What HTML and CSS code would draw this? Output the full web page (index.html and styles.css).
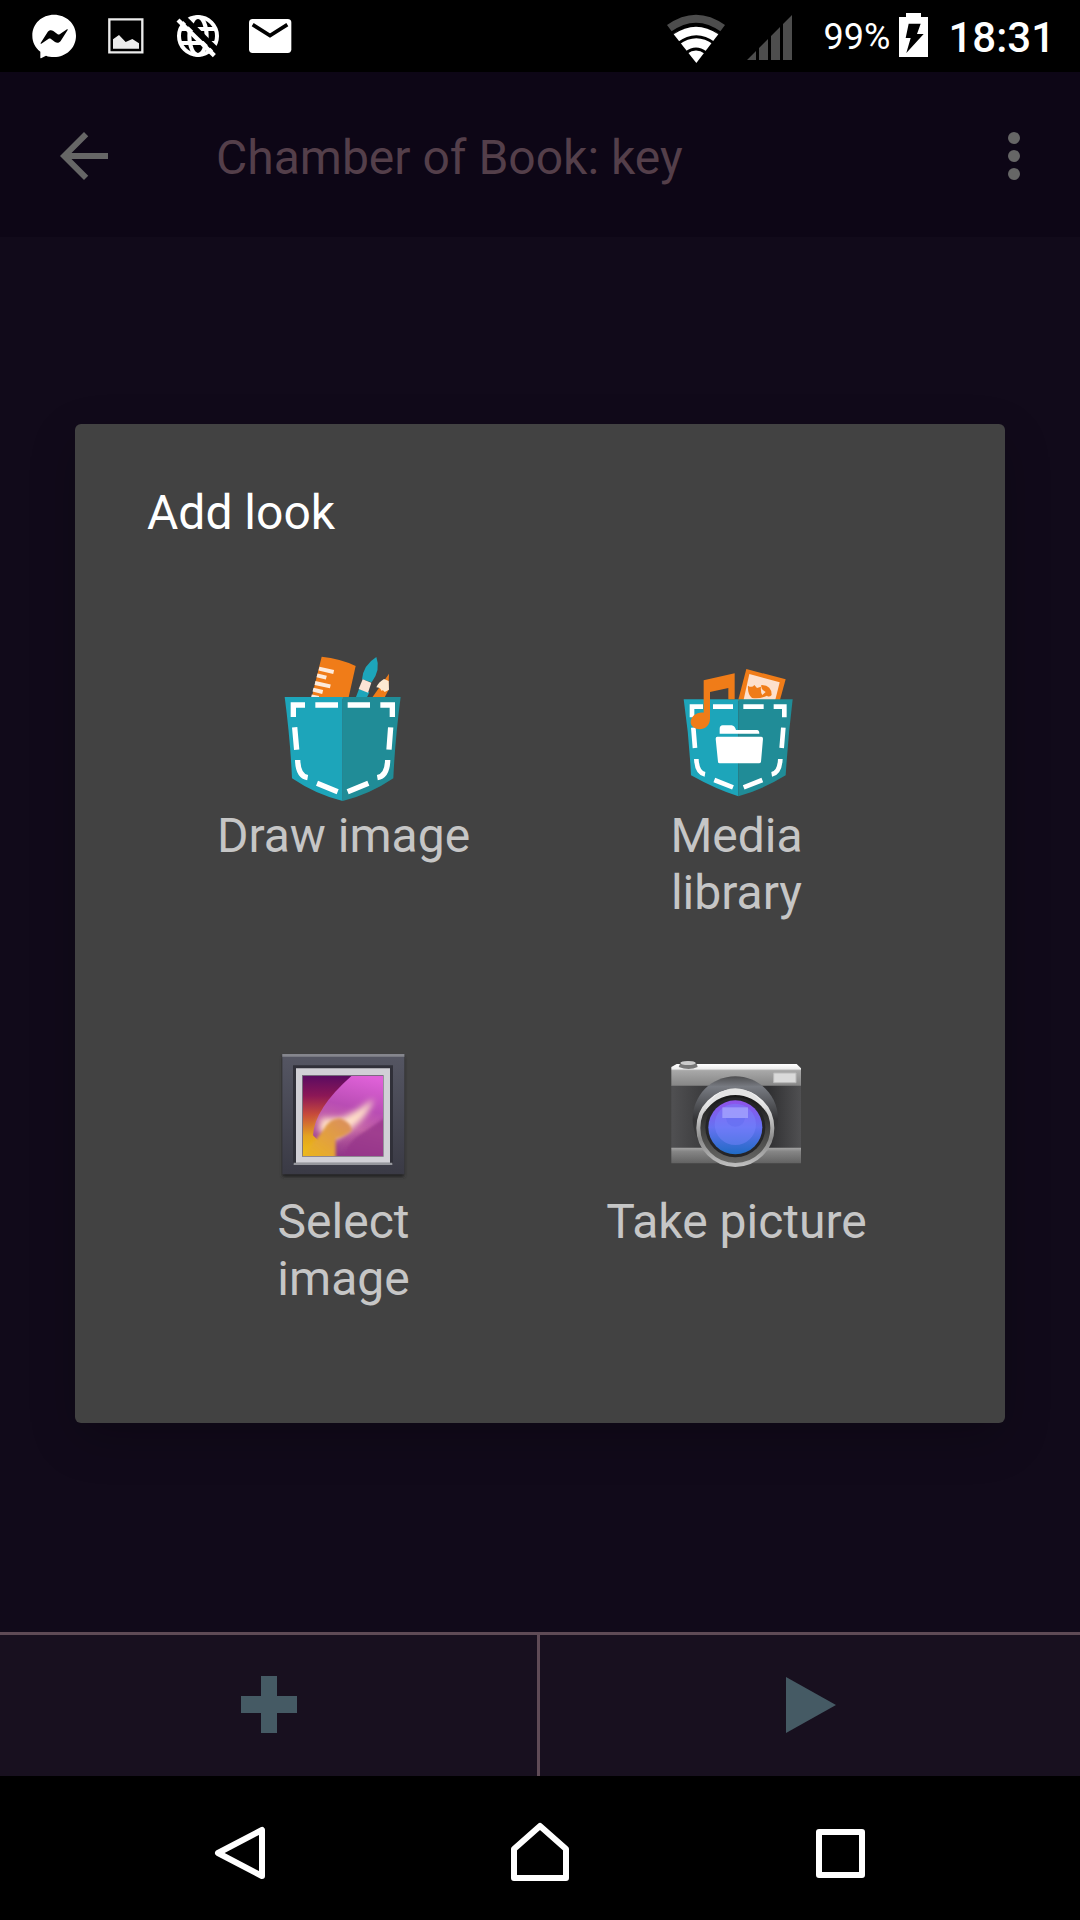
FILE: index.html
```html
<!DOCTYPE html>
<html lang="en">
<head>
<meta charset="utf-8">
<meta name="viewport" content="width=device-width, initial-scale=1">
<title>Chamber of Book: key</title>
<link rel="stylesheet" href="styles.css">
</head>
<body>
<header class="status">
  <div class="notifications">
    <svg class="notice" viewBox="54 0 216 216" aria-hidden="true">
      <path fill="#fff" d="M162 44c36 0 66 26 66 63s-30 64-66 64c-9 0-17-1-24-4l-15 8c-2 0-2-1-2-3v-17c-15-12-24-28-24-48 0-37 29-63 65-63z"/>
      <path d="M122 129l21-33c4-6 11-7 17-3l13 10c2 1 4 1 6 0l22-15c2-1 3 0 2 2l-21 33c-4 6-11 7-17 3l-13-10c-2-1-4-1-6 0l-22 15c-2 1-3 0-2-2z"/>
    </svg>
    <svg class="notice" viewBox="270 0 216 216" aria-hidden="true">
      <path fill="none" stroke="#ececec" stroke-width="7" d="M328 58h99v99h-99z"/>
      <path fill="#ececec" d="M339 146v-28l18-13 20 21 20-9 20 13v16z"/>
    </svg>
    <svg class="notice" viewBox="486 0 216 216" aria-hidden="true">
      <g fill="none" stroke="#fff" stroke-width="12">
        <circle cx="594" cy="108" r="57"/>
        <ellipse cx="594" cy="108" rx="26" ry="57"/>
        <path d="M542 87h104M542 129h104"/>
      </g>
      <path stroke="#000" stroke-width="17" d="M544 46l112 110"/>
      <path stroke="#fff" stroke-width="13" d="M534 60l109 107"/>
    </svg>
    <svg class="notice" viewBox="702 0 216 216" aria-hidden="true">
      <rect fill="#fff" x="747" y="57" width="127" height="102" rx="11"/>
      <path fill="none" stroke="#000" stroke-width="11" d="M758 74l52 33 52-33"/>
    </svg>
  </div>
  <div class="system">
    <svg class="wifi" viewBox="75 0 180 216" aria-hidden="true">
      <path fill="#4d4d4d" d="M78 75q87-62 174 0l-20 27q-67-58-134 0z"/>
      <path fill="#fff" d="M98 103q67-46 134 0l-66 86z"/>
      <g fill="none" stroke="#000"><path stroke-width="9" d="M92 99q73-53 146 0"/><path stroke-width="9" d="M112 130q54-40 108 0"/><path stroke-width="9" d="M136 158q29-22 58 0"/></g>
    </svg>
    <svg class="signal" viewBox="318 0 135 216" aria-hidden="true">
      <path fill="#4d4d4d" d="M318 180l27-27v27zM354 180v-36l27-27v63zM390 180v-72l27-27v99zM426 180V72l27-27v135z"/>
    </svg>
    <span class="percent">99%</span>
    <svg class="battery" viewBox="777 0 87 216" aria-hidden="true">
      <path fill="#fff" d="M777 51h21V39h45v12h21v120h-87z"/>
      <path d="M806 71h36l-11 31h20l-52 57 13-45h-15z"/>
    </svg>
    <time class="clock">18:31</time>
  </div>
</header>

<div class="screen">
  <header class="appbar">
    <button class="icon-button" aria-label="Back"><svg viewBox="0 0 24 24"><path d="M20 11H7.83l5.59-5.59L12 4l-8 8 8 8 1.41-1.41L7.83 13H20v-2z"/></svg></button>
    <h1 class="page-title">Chamber of Book: key</h1>
    <button class="icon-button" aria-label="More options"><svg viewBox="0 0 24 24"><circle cx="12" cy="6" r="2"/><circle cx="12" cy="12" r="2"/><circle cx="12" cy="18" r="2"/></svg></button>
  </header>
  <main class="content"></main>
  <footer class="toolbar">
    <button class="tool" aria-label="Add"><svg viewBox="0 0 72 72"><path d="M28 6h16v20h20v17H44v20H28V43H8V26h20z"/></svg></button>
    <button class="tool" aria-label="Play"><svg viewBox="0 0 72 72"><path d="M12 7l50 28-50 28z"/></svg></button>
  </footer>

  <div class="overlay">
    <section class="dialog" role="dialog" aria-labelledby="dialog-title">
      <h2 class="dialog-title" id="dialog-title">Add look</h2>
      <div class="choices">
        <button class="choice">
          <svg viewBox="-5 45 456 456" aria-hidden="true">
            <path fill="#f07c18" d="M156 50q55 5 102 28l-22 98H125z"/>
            <path stroke="#fdebdc" stroke-width="12" d="M148 86l44 10M142 106l28 7M136 129l46 10M130 149l29 7M125 169l22 5"/>
            <path fill="#1da5ba" d="M320 51q14 38-14 76l-29-9q4-43 43-67zM268 147l31 10-9 19h-33z"/>
            <path fill="#fbe3d5" d="M279 118l26 10-10 30-28-11z"/>
            <path fill="#f07c18" d="M358 101l-2 50-13 25h-38z"/>
            <path fill="#fdebd3" d="M343 117l14 6 1 26-13 7q-4-7-10-4-4-10-15-10 7-16 23-25z"/>
            <path fill="#1da5ba" d="M45 171h174v312Q139 464 67 415 62 300 45 171z"/>
            <path fill="#208c97" d="M219 171h174q-17 129-22 244-72 49-152 68z"/>
            <g fill="none" stroke="#fff" stroke-width="16">
              <path d="M106 195H71v36M137 195h68M234 195h67M332 195h36v36M75 262l6 67M363 262l-5 67M84 360q1 48 30 53M354 360q-1 48-31 53M142 430l62 25M296 430l-62 25"/>
            </g>
          </svg>
          <span class="choice-label">Draw image</span>
        </button>
        <button class="choice">
          <svg viewBox="-26 0 456 456" aria-hidden="true">
            <path fill="#f07c18" d="M230 42l118 31-18 65H205z"/>
            <path fill="#fde0cd" d="M239 57l91 25-14 56h-95z"/>
            <path fill="#f07c18" d="M235 92q12 8 19-2l8 9 12-4q-2 17 4 25l10-9q-16-8-13-21 31 0 31 30-8 8-14 2-18 10-45 7-14-12-12-37z"/>
            <path fill="#1da5ba" d="M42 133h164v291Q139 403 64 361 59 250 42 133z"/>
            <path fill="#208c97" d="M206 133h163q-14 115-21 228-68 42-142 63z"/>
            <g fill="none" stroke="#fff" stroke-width="14">
              <path d="M100 155H67v32M130 155h60M221 155h61M312 155h32v32M71 218l5 61M341 218l-5 61M80 312q2 42 26 46M332 312q-2 42-26 46M134 375l56 22M278 375l-56 22"/>
            </g>
            <path fill="#f07c18" d="M102 76l93-21v78h-19V99l-55 12v79c0 44-57 39-58 12 0-18 19-32 39-29z"/>
            <path fill="#fff" d="M150 236v-15q0-9 9-10h27q9 1 13 14h63q7 0 7 11zM143 245h132q5 0 5 6l-6 69q-1 5-6 5H150q-5 0-5-5l-7-69q0-6 5-6z"/>
          </svg>
          <span class="choice-label">Media library</span>
        </button>
        <button class="choice">
          <svg viewBox="-5 3 456 456" aria-hidden="true">
            <defs>
              <linearGradient id="frame" x2="0" y2="1"><stop stop-color="#555663"/><stop offset="1" stop-color="#3a3a45"/></linearGradient>
              <linearGradient id="dusk" x2="0" y2="1"><stop stop-color="#5a0b61"/><stop offset=".25" stop-color="#8c1756"/><stop offset=".48" stop-color="#c74a3b"/><stop offset=".75" stop-color="#e3a31f"/><stop offset="1" stop-color="#efc018"/></linearGradient>
              <linearGradient id="petal" x1=".7" y1="0" x2=".5" y2="1"><stop stop-color="#df61d8"/><stop offset=".4" stop-color="#b94db4"/><stop offset=".65" stop-color="#c465a6"/><stop offset="1" stop-color="#93388a"/></linearGradient>
              <linearGradient id="stamen" x1="1" y1="0" x2="0" y2="1"><stop stop-color="#d98b62"/><stop offset="1" stop-color="#ecb818"/></linearGradient>
              <filter id="soft" x="-30%" y="-30%" width="160%" height="160%"><feGaussianBlur stdDeviation="10"/></filter>
              <filter id="edge" x="-10%" y="-10%" width="120%" height="120%"><feGaussianBlur stdDeviation="4"/></filter>
              <clipPath id="canvas"><path d="M99 107h241v241H99z"/></clipPath>
            </defs>
            <path fill="#222" filter="url(#edge)" d="M38 50h366v360H38z"/>
            <path fill="url(#frame)" d="M38 42h366v361H38z"/>
            <path fill="#85868d" d="M38 42h366v8H38z"/>
            <path fill="#303039" d="M70 76h300v296H70z"/>
            <path fill="#96979d" d="M72 368h296v7H72z"/>
            <path fill="#d1d0d6" d="M79 85h282v283H79z"/>
            <path fill="#77717d" d="M97 105h245v245H97z"/>
            <g clip-path="url(#canvas)">
              <path fill="url(#dusk)" d="M99 107h241v241H99z"/>
              <path fill="url(#petal)" d="M246 107h94v241H190l-60-62q4-80 116-179z"/>
              <path fill="#ffe0c8" filter="url(#soft)" d="M312 176q-16 54-70 92l-46 32-50-30 10-36 60 0q50-22 96-58z"/>
              <path fill="#96358a" opacity=".8" filter="url(#edge)" d="M350 230v130H220q5-48 56-80z"/>
              <path fill="url(#stamen)" filter="url(#edge)" d="M90 358l69-85q17-38 52-39 33 12 36 37-12 15-49 26v61z"/>
            </g>
          </svg>
          <span class="choice-label">Select image</span>
        </button>
        <button class="choice">
          <svg viewBox="19 -12 456 456" aria-hidden="true">
            <defs>
              <linearGradient id="top" x2="0" y2="1"><stop stop-color="#fff"/><stop offset=".22" stop-color="#eee"/><stop offset=".3" stop-color="#a8a8a8"/><stop offset="1" stop-color="#858585"/></linearGradient>
              <linearGradient id="base" x2="0" y2="1"><stop stop-color="#a5a5a5"/><stop offset=".25" stop-color="#858585"/><stop offset="1" stop-color="#626262"/></linearGradient>
              <linearGradient id="leather" x2="1" y2="0"><stop stop-color="#505052"/><stop offset=".25" stop-color="#3c3c3e"/><stop offset=".75" stop-color="#303032"/><stop offset="1" stop-color="#505052"/></linearGradient>
              <linearGradient id="ring" x2="0" y2="1"><stop stop-color="#fff"/><stop offset=".3" stop-color="#d2d2d2"/><stop offset=".65" stop-color="#8a8a8a"/><stop offset="1" stop-color="#bdbdbd"/></linearGradient>
              <linearGradient id="barrel" x2="0" y2="1"><stop stop-color="#111"/><stop offset="1" stop-color="#6a6a68"/></linearGradient>
              <linearGradient id="glass" x2="0" y2="1"><stop stop-color="#9052ea"/><stop offset=".5" stop-color="#6672f2"/><stop offset="1" stop-color="#206bc4"/></linearGradient>
              <linearGradient id="hood" x2="0" y2="1"><stop stop-color="#4e4e50"/><stop offset=".12" stop-color="#787b82"/><stop offset=".5" stop-color="#343436"/><stop offset="1" stop-color="#404040"/></linearGradient>
            </defs>
            <path fill="url(#top)" d="M50 66l16-9h360l13 13v53H50z"/>
            <path fill="url(#leather)" d="M50 122h389v190H50z"/>
            <path fill="url(#base)" d="M50 308h389v47H50z"/>
            <path fill="#777" d="M72 66q3-16 30-18 26 2 27 18-26 12-57 0z"/>
            <ellipse cx="100" cy="54" rx="23" ry="6" fill="#ccc"/>
            <path fill="#dadada" stroke="#b9b9b9" stroke-width="3" d="M357 84h67v29h-67z"/>
            <path fill="url(#hood)" d="M242 94c72 0 128 58 128 128 0 62-45 118-128 130-83-12-128-68-128-130 0-70 56-128 128-128z"/>
            <circle cx="242" cy="249" r="116" fill="#555"/>
            <circle cx="242" cy="249" r="111" fill="url(#barrel)" stroke="url(#ring)" stroke-width="12"/>
            <path fill="#e3e3e3" d="M147 205q27-72 95-75 68 3 95 75-35-54-95-55-60 1-95 55z"/>
            <circle cx="242" cy="247" r="90" fill="#252527"/>
            <circle cx="242" cy="247" r="81" fill="url(#glass)"/>
            <circle cx="242" cy="238" r="62" fill="#7a85ff" opacity=".45"/>
            <path fill="#adafff" opacity=".65" d="M203 187h77v32h-77z"/>
            <path fill="#626bf0" opacity=".5" d="M214 219h57q-5 26-29 26t-28-26z"/>
          </svg>
          <span class="choice-label">Take picture</span>
        </button>
      </div>
    </section>
  </div>
</div>

<nav class="navbar">
  <button class="nav-button" aria-label="Back"><svg viewBox="0 0 72 72"><path d="M58 12v46L14 35z"/></svg></button>
  <button class="nav-button" aria-label="Home"><svg viewBox="0 0 72 72"><path d="M36 8l26 23v29H10V31z"/></svg></button>
  <button class="nav-button" aria-label="Recent apps"><svg viewBox="0 0 72 72"><path d="M15 14h43v43H15z"/></svg></button>
</nav>
</body>
</html>
```
FILE: styles.css
```css
* {
  box-sizing: border-box;
}

body {
  display: flex;
  flex-direction: column;
  min-height: 100vh;
  margin: 0;
  background: #000;
  color: #fff;
  font-family: Roboto, sans-serif;
  font-size: 48px;
  line-height: 57px;
}

button {
  padding: 0;
  border: 0;
  background: none;
  color: inherit;
  font: inherit;
}

svg {
  display: block;
  flex: none;
}

h1,
h2 {
  margin: 0;
  font-size: 48px;
  font-weight: 400;
}

.status {
  display: flex;
  justify-content: space-between;
  height: 72px;
  padding: 0 25px 0 18px;
}

.notifications,
.system {
  display: flex;
  align-items: center;
}

.notice {
  width: 72px;
  height: 72px;
}

.wifi {
  width: 60px;
  height: 72px;
  margin-right: 21px;
}

.signal {
  width: 45px;
  height: 72px;
  margin-right: 32px;
}

.percent {
  padding-top: 2px;
  margin-right: 9px;
  font-size: 36px;
}

.battery {
  width: 29px;
  height: 72px;
  margin-right: 20px;
}

.clock {
  padding-top: 2px;
  font-size: 42px;
  font-weight: 500;
}

.screen {
  position: relative;
  display: flex;
  flex: 1;
  flex-direction: column;
  background: #110a1a;
}

.appbar {
  display: flex;
  align-items: center;
  padding: 48px 30px 45px 48px;
  background: #0d0616;
}

.icon-button,
.icon-button svg {
  width: 72px;
  height: 72px;
  fill: #666;
}

.page-title {
  flex: 1;
  padding: 2px 0 0 96px;
  color: #543f4a;
}

.content {
  flex: 1;
}

.toolbar {
  display: grid;
  grid-template-columns: 1fr 1fr;
  border-top: 3px solid #5f4b56;
  background: #18101f;
}

.tool {
  display: flex;
  align-items: center;
  justify-content: center;
  height: 141px;
}

.tool:first-child {
  border-right: 3px solid #5f4b56;
}

.tool svg {
  width: 72px;
  height: 72px;
  fill: #455a64;
}

.overlay {
  position: absolute;
  inset: 0;
  display: flex;
  align-items: center;
  justify-content: center;
  padding: 0 75px 2px;
}

.dialog {
  flex: 1;
  padding: 60px 72px 116px;
  border-radius: 6px;
  background: #424242;
  box-shadow: 0 16px 48px rgba(0, 0, 0, 0.2);
}

.dialog-title {
  padding-bottom: 114px;
}

.choices {
  display: grid;
  grid-template-columns: 1fr 1fr;
  row-gap: 120px;
}

.choice {
  display: flex;
  flex-direction: column;
  align-items: center;
}

.choice svg {
  width: 152px;
  height: 152px;
}

.choice-label {
  max-width: 262px;
  color: #c6c6c6;
}

.navbar {
  display: grid;
  grid-template-columns: repeat(3, 1fr);
  height: 144px;
  padding: 12px 90px 0;
}

.nav-button {
  display: flex;
  align-items: center;
  justify-content: center;
}

.nav-button svg {
  width: 72px;
  height: 72px;
  fill: none;
  stroke: #fff;
  stroke-width: 6;
  stroke-linejoin: round;
}
```
